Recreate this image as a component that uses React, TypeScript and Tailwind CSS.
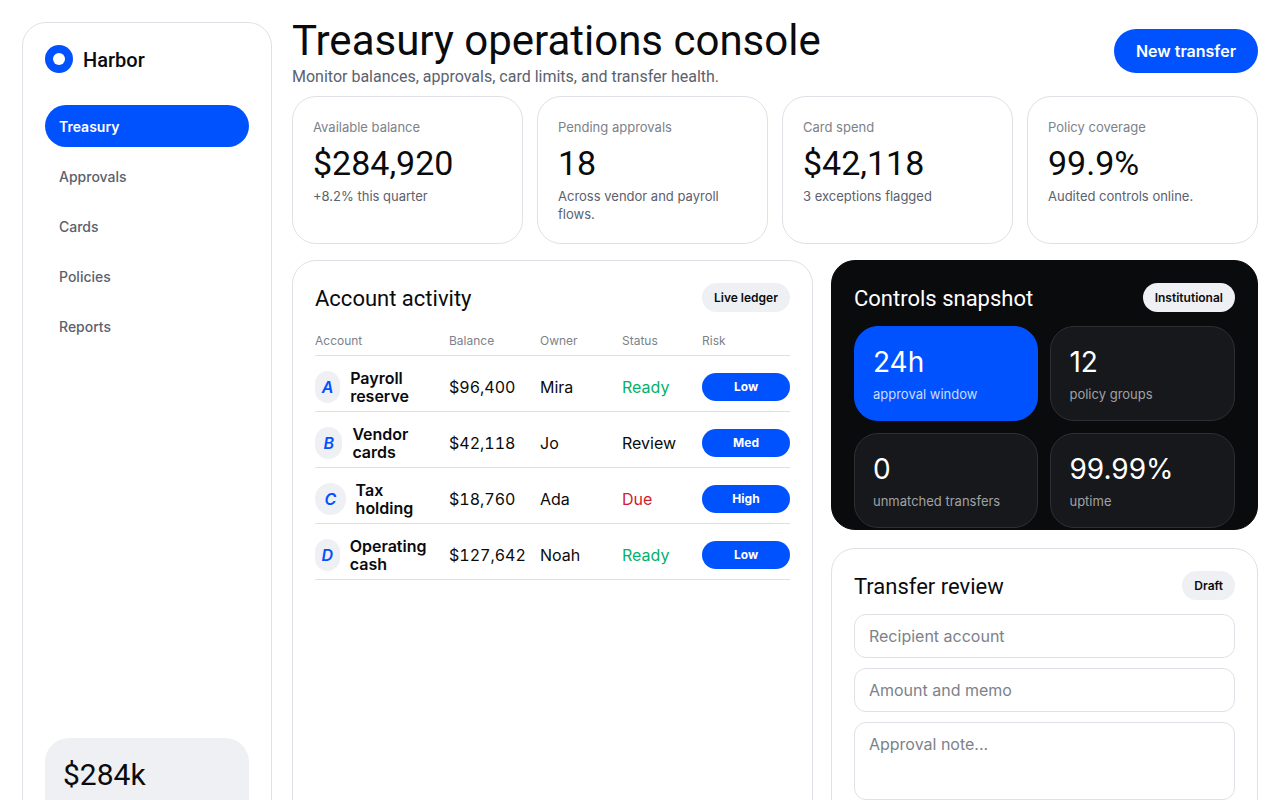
import type { ReactNode } from "react";

const NAV_ITEMS = ["Treasury", "Approvals", "Cards", "Policies", "Reports"];

const STATS = [
  { label: "Available balance", value: "$284,920", note: "+8.2% this quarter" },
  { label: "Pending approvals", value: "18", note: "Across vendor and payroll flows." },
  { label: "Card spend", value: "$42,118", note: "3 exceptions flagged" },
  { label: "Policy coverage", value: "99.9%", note: "Audited controls online." },
];

const ACCOUNTS = [
  { mark: "A", name: "Payroll reserve", balance: "$96,400", owner: "Mira", status: "Ready", risk: "Low" },
  { mark: "B", name: "Vendor cards", balance: "$42,118", owner: "Jo", status: "Review", risk: "Med" },
  { mark: "C", name: "Tax holding", balance: "$18,760", owner: "Ada", status: "Due", risk: "High" },
  { mark: "D", name: "Operating cash", balance: "$127,642", owner: "Noah", status: "Ready", risk: "Low" },
];

const CONTROLS = [
  { value: "24h", label: "approval window", active: true },
  { value: "12", label: "policy groups" },
  { value: "0", label: "unmatched transfers" },
  { value: "99.99%", label: "uptime" },
];

const STATUS_COLORS: Record<string, string> = {
  Ready: "text-[#05b169]",
  Due: "text-[#cf202f]",
};

function Sidebar() {
  return (
    <aside className="flex flex-col rounded-3xl border border-[#dee1e6] p-[22px]">
      <div className="flex items-center gap-2.5">
        <span className="flex h-7 w-7 items-center justify-center rounded-full bg-[#0052ff]">
          <span className="h-3 w-3 rounded-full bg-white" />
        </span>
        <span className="pt-0.5 font-[Roboto,sans-serif] text-xl leading-6 font-medium">Harbor</span>
      </div>
      <nav className="mt-8 grid gap-2">
        {NAV_ITEMS.map((item, i) => (
          <a
            key={item}
            href="#"
            className={`flex h-[42px] items-center rounded-full px-3.5 pt-0.5 text-sm ${
              i === 0 ? "bg-[#0052ff] font-semibold text-white" : "font-medium text-[#5b616e]"
            }`}
          >
            {item}
          </a>
        ))}
      </nav>
      <div className="mt-auto rounded-3xl bg-[#eef0f3] px-[18px] pt-[18px] pb-[34px]">
        <div className="pt-0.5 font-[Roboto,sans-serif] text-[30px] leading-[34px]">$284k</div>
      </div>
    </aside>
  );
}

function PanelHead({ title, tag }: { title: string; tag: string }) {
  return (
    <div className="mb-3.5 flex items-center justify-between gap-3">
      <h2 className="pt-0.5 font-[Roboto,sans-serif] text-[22px] leading-[26px]">{title}</h2>
      <span className="rounded-full bg-[#eef0f3] px-3 py-1.5 text-xs leading-[17px] font-semibold text-[#0a0b0d]">
        {tag}
      </span>
    </div>
  );
}

function Th({ className, children }: { className: string; children: ReactNode }) {
  return (
    <th className={`py-1.5 text-left text-xs leading-[17px] font-normal text-[#7c828a] ${className}`}>
      {children}
    </th>
  );
}

function AccountActivity() {
  return (
    <section className="rounded-3xl border border-[#dee1e6] p-[22px]">
      <PanelHead title="Account activity" tag="Live ledger" />
      <table className="w-full table-fixed border-collapse">
        <thead>
          <tr className="border-b border-[#dee1e6]">
            <Th className="w-[134px]">Account</Th>
            <Th className="w-[91px]">Balance</Th>
            <Th className="w-[82px]">Owner</Th>
            <Th className="w-[80px]">Status</Th>
            <Th className="w-[88px]">Risk</Th>
          </tr>
        </thead>
        <tbody>
          {ACCOUNTS.map((a) => (
            <tr key={a.mark} className="h-14 border-b border-[#dee1e6]">
              <td className="pt-1.5 pr-2">
                <div className="flex items-center gap-2.5 leading-[18px] font-semibold">
                  <i className="flex h-8 w-8 items-center justify-center rounded-full bg-[#eef0f3] text-[#0052ff]">
                    {a.mark}
                  </i>
                  <span>{a.name}</span>
                </div>
              </td>
              <td className="pt-1.5 tabular-nums">{a.balance}</td>
              <td className="pt-1.5">{a.owner}</td>
              <td className={`pt-1.5 ${STATUS_COLORS[a.status] ?? ""}`}>{a.status}</td>
              <td className="pt-1.5">
                <span className="block rounded-full bg-[#0052ff] text-center text-xs leading-7 font-bold text-white">
                  {a.risk}
                </span>
              </td>
            </tr>
          ))}
        </tbody>
      </table>
    </section>
  );
}

function ControlsSnapshot() {
  return (
    <section className="h-[270px] rounded-3xl border border-[#0a0b0d] bg-[#0a0b0d] p-[22px] text-white">
      <PanelHead title="Controls snapshot" tag="Institutional" />
      <div className="grid grid-cols-2 gap-3">
        {CONTROLS.map((c) => (
          <div
            key={c.label}
            className={`rounded-3xl border p-[18px] ${
              c.active ? "border-[#0052ff] bg-[#0052ff]" : "border-[#2e2f32] bg-[#16181c]"
            }`}
          >
            <div className="text-[28px] leading-[34px]">{c.value}</div>
            <div
              className={`mt-2 text-[13px] leading-[15px] ${
                c.active ? "text-[#ccdcff]" : "text-[#a1a2a4]"
              }`}
            >
              {c.label}
            </div>
          </div>
        ))}
      </div>
    </section>
  );
}

function TransferReview() {
  const field =
    "block w-full rounded-xl border border-[#dee1e6] bg-white px-3.5 text-base placeholder:text-[#7c828a]";
  return (
    <section className="rounded-3xl border border-[#dee1e6] px-[22px] pt-[22px] pb-12">
      <PanelHead title="Transfer review" tag="Draft" />
      <form className="grid gap-2.5">
        <input aria-label="Recipient account" placeholder="Recipient account" className={`${field} h-11`} />
        <input aria-label="Amount and memo" placeholder="Amount and memo" className={`${field} h-11`} />
        <textarea
          aria-label="Approval note"
          placeholder="Approval note..."
          className={`${field} h-[78px] resize-none py-3 leading-[18px]`}
        />
      </form>
    </section>
  );
}

export default function App() {
  return (
    <div className="grid min-h-screen grid-cols-[250px_minmax(0,1fr)] gap-5 bg-white p-[22px] font-[Inter,sans-serif] text-[#0a0b0d]">
      <Sidebar />
      <main className="flex flex-col gap-4">
        <header className="flex h-[58px] items-center justify-between gap-4">
          <div className="pt-0.5 font-[Roboto,sans-serif]">
            <h1 className="text-[42px] leading-[46px]">Treasury operations console</h1>
            <p className="mt-1 text-base leading-[18px] text-[#5b616e]">
              Monitor balances, approvals, card limits, and transfer health.
            </p>
          </div>
          <button type="button" className="h-11 rounded-full bg-[#0052ff] px-[22px] font-semibold text-white">
            New transfer
          </button>
        </header>

        <section className="grid grid-cols-4 gap-3.5">
          {STATS.map((s) => (
            <article key={s.label} className="rounded-3xl border border-[#dee1e6] p-5 text-[13px] leading-[18px]">
              <div className="leading-5 text-[#7c828a]">{s.label}</div>
              <div className="mt-2 mb-1.5 font-[Roboto,sans-serif] text-[34px] leading-9">{s.value}</div>
              <div className="text-[#5b616e]">{s.note}</div>
            </article>
          ))}
        </section>

        <div className="grid flex-1 grid-cols-[minmax(0,1.22fr)_minmax(0,1fr)] gap-[18px]">
          <AccountActivity />
          <div className="flex flex-col gap-[18px]">
            <ControlsSnapshot />
            <TransferReview />
          </div>
        </div>
      </main>
    </div>
  );
}
